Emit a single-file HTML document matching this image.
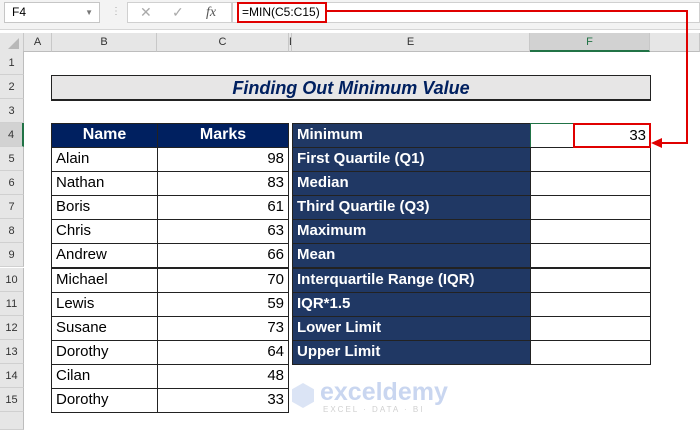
<!DOCTYPE html>
<html><head><style>
body{margin:0;width:700px;height:430px;overflow:hidden;background:#fff;font-family:"Liberation Sans",sans-serif;position:relative}
div{position:absolute;box-sizing:border-box}
.rh{left:0;width:24px;background:#e6e6e6;border-bottom:1px solid #d0d0d0;border-right:1px solid #bdbdbd;font-size:11px;color:#333;text-align:center;line-height:24px;height:24px}
.ch{top:33px;height:19px;background:#e6e6e6;border-right:1px solid #c8c8c8;border-bottom:1px solid #bdbdbd;font-size:11px;color:#333;text-align:center;line-height:19px}
.c{border:1px solid #222;font-size:15px;line-height:22px;padding:0 4px;height:25px;white-space:nowrap;color:#000}
.n{text-align:right}
.h{background:#002060;color:#fff;font-weight:bold;text-align:center;font-size:16px}
.e{background:#203864;color:#fff;font-weight:bold;left:292px;width:239px}
.f{left:530px;width:121px;background:#fff}
</style></head><body>
<div style="left:0;top:0;width:700px;height:30px;background:#f3f3f3;border-bottom:1px solid #d6d6d6"></div>
<div style="left:4px;top:2px;width:96px;height:21px;background:#fff;border:1px solid #c6c6c6;font-size:12px;line-height:19px;padding-left:7px">F4<span style="position:absolute;right:6px;top:0;font-size:8px;color:#777">▼</span></div>
<div style="left:111px;top:6px;color:#aaa;font-size:10px">⋮</div>
<div style="left:127px;top:2px;width:105px;height:21px;background:#fff;border:1px solid #d0d0d0;color:#aaa;font-size:14px;line-height:19px"><span style="position:absolute;left:12px">✕</span><span style="position:absolute;left:44px">✓</span><span style="position:absolute;left:78px;font-style:italic;font-family:'Liberation Serif',serif;color:#555">fx</span></div>
<div style="left:232px;top:2px;width:468px;height:21px;background:#fff;border:1px solid #d0d0d0"></div>
<div style="left:237px;top:2px;width:90px;height:21px;border:2px solid #e00000;font-size:12px;line-height:17px;padding-left:3px;background:#fff;white-space:nowrap;overflow:hidden">=MIN(C5:C15)</div>
<div class="ch" style="left:0;width:24px"></div>
<div style="left:8px;top:38px;width:0;height:0;border-left:11px solid transparent;border-bottom:11px solid #b8b8b8"></div>
<div class="ch" style="left:24px;width:28px">A</div>
<div class="ch" style="left:52px;width:105px">B</div>
<div class="ch" style="left:157px;width:132px">C</div>
<div class="ch" style="left:289px;width:3px;overflow:hidden">D</div>
<div class="ch" style="left:292px;width:238px">E</div>
<div class="ch" style="left:530px;width:120px;background:#d2d2d2;border-bottom:2px solid #217346;color:#217346">F</div>
<div class="ch" style="left:650px;width:50px"></div>
<div class="rh" style="top:51px">1</div><div class="rh" style="top:75px">2</div><div class="rh" style="top:99px">3</div>
<div class="rh" style="top:123px;background:#d2d2d2;border-right:2px solid #217346">4</div><div class="rh" style="top:147px">5</div><div class="rh" style="top:171px">6</div>
<div class="rh" style="top:195px">7</div><div class="rh" style="top:219px">8</div><div class="rh" style="top:243px">9</div>
<div class="rh" style="top:268px">10</div><div class="rh" style="top:292px">11</div><div class="rh" style="top:316px">12</div>
<div class="rh" style="top:340px">13</div><div class="rh" style="top:364px">14</div><div class="rh" style="top:388px">15</div>
<div class="rh" style="top:412px;height:18px"></div>
<div style="left:51px;top:75px;width:600px;height:26px;background:#e7e6e6;border:1px solid #222;border-bottom:2px solid #222;text-align:center;font-size:18px;font-weight:bold;font-style:italic;color:#002060;line-height:24px">Finding Out Minimum Value</div>
<div class="c h" style="left:51px;top:123px;width:107px">Name</div>
<div class="c h" style="left:157px;top:123px;width:132px">Marks</div>
<div class="c" style="left:51px;top:147px;width:107px">Alain</div><div class="c n" style="left:157px;top:147px;width:132px">98</div>
<div class="c" style="left:51px;top:171px;width:107px">Nathan</div><div class="c n" style="left:157px;top:171px;width:132px">83</div>
<div class="c" style="left:51px;top:195px;width:107px">Boris</div><div class="c n" style="left:157px;top:195px;width:132px">61</div>
<div class="c" style="left:51px;top:219px;width:107px">Chris</div><div class="c n" style="left:157px;top:219px;width:132px">63</div>
<div class="c" style="left:51px;top:243px;width:107px">Andrew</div><div class="c n" style="left:157px;top:243px;width:132px">66</div>
<div class="c" style="left:51px;top:268px;width:107px">Michael</div><div class="c n" style="left:157px;top:268px;width:132px">70</div>
<div class="c" style="left:51px;top:292px;width:107px">Lewis</div><div class="c n" style="left:157px;top:292px;width:132px">59</div>
<div class="c" style="left:51px;top:316px;width:107px">Susane</div><div class="c n" style="left:157px;top:316px;width:132px">73</div>
<div class="c" style="left:51px;top:340px;width:107px">Dorothy</div><div class="c n" style="left:157px;top:340px;width:132px">64</div>
<div class="c" style="left:51px;top:364px;width:107px">Cilan</div><div class="c n" style="left:157px;top:364px;width:132px">48</div>
<div class="c" style="left:51px;top:388px;width:107px">Dorothy</div><div class="c n" style="left:157px;top:388px;width:132px">33</div>
<div class="c e" style="top:123px">Minimum</div><div class="c f" style="top:123px;border:1px solid #217346"></div>
<div class="c e" style="top:147px">First Quartile (Q1)</div><div class="c f" style="top:147px"></div>
<div class="c e" style="top:171px">Median</div><div class="c f" style="top:171px"></div>
<div class="c e" style="top:195px">Third Quartile (Q3)</div><div class="c f" style="top:195px"></div>
<div class="c e" style="top:219px">Maximum</div><div class="c f" style="top:219px"></div>
<div class="c e" style="top:243px">Mean</div><div class="c f" style="top:243px"></div>
<div class="c e" style="top:268px">Interquartile Range (IQR)</div><div class="c f" style="top:268px"></div>
<div class="c e" style="top:292px">IQR*1.5</div><div class="c f" style="top:292px"></div>
<div class="c e" style="top:316px">Lower Limit</div><div class="c f" style="top:316px"></div>
<div class="c e" style="top:340px">Upper Limit</div><div class="c f" style="top:340px"></div>
<div style="left:573px;top:123px;width:78px;height:25px;border:2px solid #e00000;font-size:15px;text-align:right;line-height:21px;padding-right:3px">33</div>
<svg style="position:absolute;left:0;top:0" width="700" height="430"><polyline points="327,11 687,11 687,143 660,143" fill="none" stroke="#e00000" stroke-width="2"/><polygon points="651,143 662,138 662,148" fill="#e00000"/></svg>
<div style="left:292px;top:383px;width:22px;height:25px;background:#dbe4f5;clip-path:polygon(50% 0,100% 25%,100% 75%,50% 100%,0 75%,0 25%)"></div>
<div style="left:320px;top:378px;font-size:25px;font-weight:bold;color:#c9d6f0">exceldemy</div>
<div style="left:323px;top:405px;font-size:8px;letter-spacing:2px;color:#d0d0d0">EXCEL · DATA · BI</div>
</body></html>
